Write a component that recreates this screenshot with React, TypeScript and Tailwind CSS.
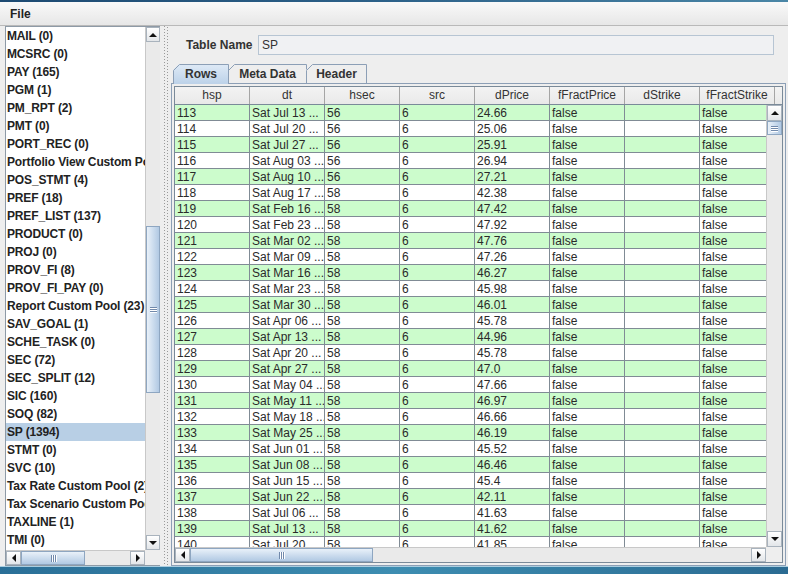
import React from "react";

const listItems = [
  "MAIL (0)", "MCSRC (0)", "PAY (165)", "PGM (1)", "PM_RPT (2)", "PMT (0)", "PORT_REC (0)",
  "Portfolio View Custom Pool (5)", "POS_STMT (4)", "PREF (18)", "PREF_LIST (137)", "PRODUCT (0)",
  "PROJ (0)", "PROV_FI (8)", "PROV_FI_PAY (0)", "Report Custom Pool (23)", "SAV_GOAL (1)",
  "SCHE_TASK (0)", "SEC (72)", "SEC_SPLIT (12)", "SIC (160)", "SOQ (82)", "SP (1394)", "STMT (0)",
  "SVC (10)", "Tax Rate Custom Pool (2)", "Tax Scenario Custom Pool (0)", "TAXLINE (1)", "TMI (0)",
];

const dates = [
  "Jul 13", "Jul 20", "Jul 27", "Aug 03", "Aug 10", "Aug 17", "Feb 16", "Feb 23", "Mar 02", "Mar 09",
  "Mar 16", "Mar 23", "Mar 30", "Apr 06", "Apr 13", "Apr 20", "Apr 27", "May 04", "May 11", "May 18",
  "May 25", "Jun 01", "Jun 08", "Jun 15", "Jun 22", "Jul 06", "Jul 13", "Jul 20",
];
const prices = [
  "24.66", "25.06", "25.91", "26.94", "27.21", "42.38", "47.42", "47.92", "47.76", "47.26", "46.27",
  "45.98", "46.01", "45.78", "44.96", "45.78", "47.0", "47.66", "46.97", "46.66", "46.19", "45.52",
  "46.46", "45.4", "42.11", "41.63", "41.62", "41.85",
];

const columns = ["hsp", "dt", "hsec", "src", "dPrice", "fFractPrice", "dStrike", "fFractStrike"];

function Arrow({ dir }: { dir: "up" | "down" | "left" | "right" }) {
  if (dir === "up")
    return (
      <svg width="8" height="4" viewBox="0 0 8 4"><polygon points="0,4 8,4 4,0" fill="#111" /></svg>
    );
  if (dir === "down")
    return (
      <svg width="8" height="4" viewBox="0 0 8 4"><polygon points="0,0 8,0 4,4" fill="#111" /></svg>
    );
  if (dir === "left")
    return (
      <svg width="4" height="8" viewBox="0 0 4 8"><polygon points="4,0 4,8 0,4" fill="#111" /></svg>
    );
  return (
    <svg width="4" height="8" viewBox="0 0 4 8"><polygon points="0,0 0,8 4,4" fill="#111" /></svg>
  );
}

function GripH() {
  return (
    <div className="flex flex-col gap-[1px]">
      {[0, 1, 2].map((i) => (
        <div key={i} className="w-[7px] h-[1px] bg-[#7189ab] shadow-[0_1px_0_#ffffff]" />
      ))}
    </div>
  );
}

function GripV() {
  return (
    <div className="flex flex-row gap-[1px]">
      {[0, 1, 2].map((i) => (
        <div key={i} className="h-[7px] w-[1px] bg-[#7189ab] shadow-[1px_0_0_#ffffff]" />
      ))}
    </div>
  );
}

const btnCls =
  "shrink-0 flex items-center justify-center border border-[#a9b3bd] bg-gradient-to-b from-[#ffffff] to-[#e3e6e9]";

function Tab({
  label,
  width,
  selected,
  extra,
}: {
  label: string;
  width: number;
  selected?: boolean;
  extra: string;
}) {
  const H = selected ? 20 : 19;
  const W = width;
  return (
    <div className={`relative flex items-center justify-center shrink-0 font-bold text-[#333] ${extra}`}>
      <svg className="absolute inset-0" width={W} height={H} viewBox={`0 0 ${W} ${H}`}>
        <defs>
          <linearGradient id="tabsel" x1="0" y1="0" x2="0" y2="1">
            <stop offset="0" stopColor="#dfeaf6" />
            <stop offset="1" stopColor="#bcd2e9" />
          </linearGradient>
        </defs>
        <polygon
          points={`0,${H} 0,6 6,0 ${W},0 ${W},${H}`}
          fill={selected ? "url(#tabsel)" : "#eeeeee"}
        />
        <path
          d={`M0.5 ${H} V6.5 L6.5 0.5 H${W - 0.5} V${H}`}
          fill="none"
          stroke="#8c9fb6"
          strokeWidth="1"
        />
      </svg>
      <span className="relative">{label}</span>
    </div>
  );
}

export default function App() {
  return (
    <div className="w-[788px] h-[574px] overflow-hidden flex flex-col bg-[#eeeeee] text-[12px] text-[#333] font-['Liberation_Sans',Arial,sans-serif]">
      <div className="h-[2px] shrink-0 bg-gradient-to-r from-[#1d4a72] via-[#2d628a] to-[#4a86a6]" />
      <div className="h-[24px] shrink-0 flex items-center pl-[10px] font-bold text-[#222] border-b border-[#b9b9b9] bg-gradient-to-b from-[#f9f9f9] to-[#e7e7e7]">
        File
      </div>

      <div className="flex-1 flex min-h-0">
        {/* Left list pane */}
        <div className="ml-[5px] w-[155px] shrink-0 flex flex-col border-l border-t border-b border-[#8e9aa6]">
          <div className="flex-1 flex min-h-0">
            <div className="flex-1 overflow-hidden bg-white">
              {listItems.map((it) => (
                <div
                  key={it}
                  className={`h-[18px] leading-[18px] pl-[1px] whitespace-nowrap font-bold tracking-[-0.15px] text-[#222] ${
                    it === "SP (1394)" ? "bg-[#b8cfe5]" : ""
                  }`}
                >
                  {it}
                </div>
              ))}
            </div>
            <div className="w-[15px] shrink-0 flex flex-col bg-[#eaeaea] border-l border-[#c8c8c8]">
              <div className={`${btnCls} h-[15px]`}>
                <Arrow dir="up" />
              </div>
              <div className="flex-1 flex flex-col">
                <div className="mt-[184px] h-[167px] border border-[#8ea6c1] bg-gradient-to-r from-[#e9f1f9] to-[#b1c9e3] flex items-center justify-center">
                  <GripH />
                </div>
              </div>
              <div className={`${btnCls} h-[15px]`}>
                <Arrow dir="down" />
              </div>
            </div>
          </div>
          <div className="h-[15px] shrink-0 flex">
            <div className="flex-1 flex bg-[#eaeaea] border-t border-[#c8c8c8]">
              <div className={`${btnCls} w-[15px]`}>
                <Arrow dir="left" />
              </div>
              <div className="flex-1 flex">
                <div className="w-[64px] border border-[#8ea6c1] bg-gradient-to-b from-[#e9f1f9] to-[#b1c9e3] flex items-center justify-center">
                  <GripV />
                </div>
              </div>
              <div className={`${btnCls} w-[15px]`}>
                <Arrow dir="right" />
              </div>
            </div>
            <div className="w-[15px] shrink-0 bg-[#eeeeee]" />
          </div>
        </div>

        {/* Splitter */}
        <div className="w-[10px] shrink-0 flex pl-[4px] gap-[2px]">
          <div className="w-[1px] h-full bg-[repeating-linear-gradient(to_bottom,#9a9a9a_0px,#9a9a9a_1px,transparent_1px,transparent_3px)]" />
          <div className="w-[1px] h-full bg-[repeating-linear-gradient(to_bottom,transparent_0px,transparent_1px,#9a9a9a_1px,#9a9a9a_2px,transparent_2px,transparent_3px)]" />
        </div>

        {/* Right panel */}
        <div className="flex-1 flex flex-col min-w-0 pl-[1px] pr-[2px]">
          <div className="mt-[9px] h-[20px] shrink-0 flex items-center">
            <div className="w-[87px] pl-[15px] font-bold text-[#333] whitespace-nowrap">Table Name</div>
            <div className="flex-1 mr-[12px] h-[20px] border border-[#b7c5d3] bg-[#f0f1f3] pl-[3px] flex items-center text-[#333]">
              SP
            </div>
          </div>

          <div className="mt-[9px] h-[20px] shrink-0 flex items-start pl-[2px] -mb-[1px] relative z-10">
            <Tab label="Rows" width={56} selected extra="w-[56px] h-[20px] z-10" />
            <Tab label="Meta Data" width={79} extra="w-[79px] h-[19px] -ml-[1px]" />
            <Tab label="Header" width={61} extra="w-[61px] h-[19px] -ml-[1px]" />
          </div>

          <div className="flex-1 min-h-0 flex flex-col border border-[#8c9fb6] p-[2px]">
            <div className="flex-1 min-h-0 flex flex-col border border-[#7a8a99] bg-white">
              {/* header */}
              <div className="h-[18px] shrink-0 flex border-b border-[#7a8a99] bg-gradient-to-b from-[#f3f3f3] to-[#e9e9e9] overflow-hidden">
                {columns.map((c) => (
                  <div
                    key={c}
                    className="w-[75px] shrink-0 border-r border-[#a5a5a5] text-center leading-[17px] text-[#333] whitespace-nowrap"
                  >
                    {c}
                  </div>
                ))}
              </div>
              {/* body */}
              <div className="flex-1 min-h-0 flex">
                <div className="flex-1 min-w-0 overflow-hidden">
                  {dates.map((d, i) => (
                    <div
                      key={i}
                      className={`flex h-[16px] ${i % 2 === 0 ? "bg-[#ccfccc]" : "bg-white"}`}
                    >
                      {[
                        String(113 + i),
                        `Sat ${d} ...`,
                        i < 5 ? "56" : "58",
                        "6",
                        prices[i],
                        "false",
                        "",
                        "false",
                      ].map((v, j) => (
                        <div
                          key={j}
                          className="w-[75px] h-[16px] shrink-0 border-r border-b border-[#808b95] pl-[2px] leading-[16px] overflow-hidden whitespace-nowrap text-[#2a2a2a]"
                        >
                          {v}
                        </div>
                      ))}
                    </div>
                  ))}
                </div>
                <div className="w-[16px] shrink-0 flex flex-col bg-[#eaeaea] border-l border-[#c8c8c8]">
                  <div className={`${btnCls} h-[16px]`}>
                    <Arrow dir="up" />
                  </div>
                  <div className="flex-1 flex flex-col">
                    <div className="h-[14px] border border-[#8ea6c1] bg-gradient-to-r from-[#e9f1f9] to-[#b1c9e3] flex items-center justify-center">
                      <GripH />
                    </div>
                  </div>
                  <div className={`${btnCls} h-[16px]`}>
                    <Arrow dir="down" />
                  </div>
                </div>
              </div>
              {/* bottom scrollbar row */}
              <div className="h-[15px] shrink-0 flex">
                <div className="flex-1 flex bg-[#eaeaea] border-t border-[#c8c8c8]">
                  <div className={`${btnCls} w-[15px]`}>
                    <Arrow dir="left" />
                  </div>
                  <div className="flex-1 flex">
                    <div className="w-[183px] border border-[#8ea6c1] bg-gradient-to-b from-[#e9f1f9] to-[#b1c9e3] flex items-center justify-center">
                      <GripV />
                    </div>
                  </div>
                  <div className={`${btnCls} w-[15px]`}>
                    <Arrow dir="right" />
                  </div>
                </div>
                <div className="w-[16px] shrink-0 bg-[#eeeeee]" />
              </div>
            </div>
          </div>
        </div>
      </div>

      <div className="h-[8px] shrink-0 border-t border-[#a9cde0] bg-gradient-to-r from-[#2a6f97] via-[#3d8db1] to-[#2b6b92]" />
    </div>
  );
}
